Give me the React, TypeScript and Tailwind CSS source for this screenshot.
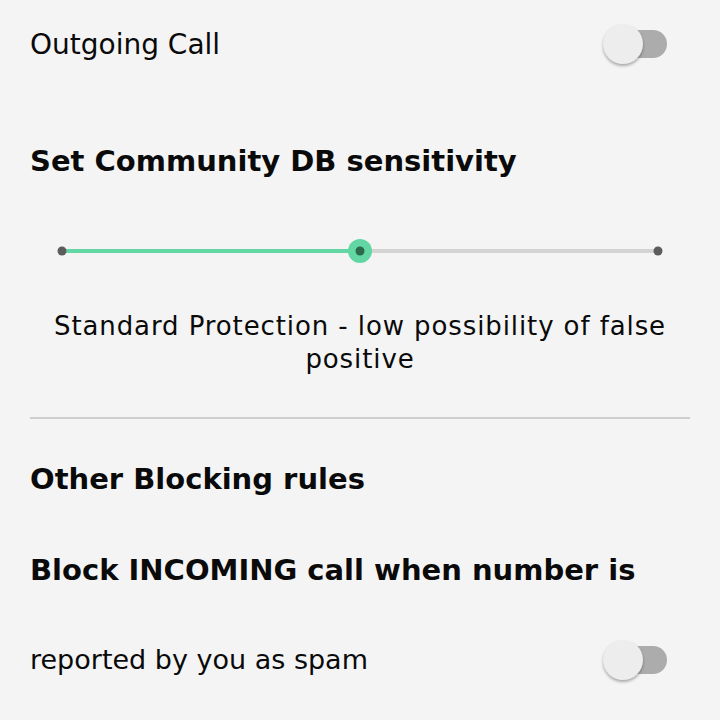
function Toggle() {
  return (
    <div className="relative w-[64px] h-[40px] mr-[23px]">
      <div className="absolute left-[4px] right-0 top-[6px] h-[28px] rounded-full bg-[#acacac]" />
      <div className="absolute left-0 top-0 w-[40px] h-[40px] rounded-full bg-[#ededed] shadow-[0_2px_3px_rgba(0,0,0,0.3)]" />
    </div>
  );
}

function Slider() {
  return (
    <svg width="660" height="30" viewBox="0 0 660 30" className="block">
      <line x1="32" y1="15" x2="330" y2="15" stroke="#62d6a3" strokeWidth="4" />
      <line x1="330" y1="15" x2="628" y2="15" stroke="#d4d4d4" strokeWidth="4" />
      <circle cx="32" cy="15" r="4.5" fill="#5c5c5c" />
      <circle cx="628" cy="15" r="4.5" fill="#5c5c5c" />
      <circle cx="330" cy="15" r="12" fill="#62d6a3" />
      <circle cx="330" cy="15" r="4.5" fill="#2d6a4d" />
    </svg>
  );
}

export default function App() {
  return (
    <div className="min-h-screen bg-[#f4f4f4] px-[30px] text-[#0a0a0a] font-['DejaVu_Sans',sans-serif]">
      <div className="h-[88px] flex items-center justify-between">
        <span className="text-[28px] pt-[2px]">Outgoing Call</span>
        <Toggle />
      </div>

      <div className="h-[148px] flex items-center">
        <h2 className="text-[29px] font-bold">Set Community DB sensitivity</h2>
      </div>

      <Slider />

      <p className="mt-[44px] text-center text-[26px] leading-[33px] tracking-[0.9px]">
        Standard Protection - low possibility of false positive
      </p>

      <div className="mt-[41px] h-[2px] bg-[#cfcfcf]" />

      <div className="h-[122px] flex items-center">
        <h2 className="text-[29px] font-bold">Other Blocking rules</h2>
      </div>

      <div className="h-[60px] flex items-center">
        <h2 className="text-[29px] font-bold">Block INCOMING call when number is</h2>
      </div>

      <div className="h-[118px] flex items-center justify-between">
        <span className="text-[27px]">reported by you as spam</span>
        <Toggle />
      </div>
    </div>
  );
}
